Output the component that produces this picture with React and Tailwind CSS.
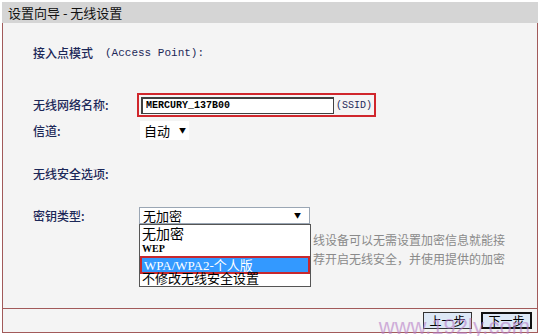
import React from "react";

// Wireless setup wizard step: router admin page
const cjk = { fontFamily: '"Noto Sans CJK SC", "Liberation Sans", sans-serif' };
const mono = { fontFamily: '"Liberation Mono", "Noto Sans CJK SC", monospace' };

function Label({ children }) {
  return (
    <div className="w-[104px] shrink-0 text-[12px] leading-[14px] font-medium text-[#1c2858]">
      {children}
    </div>
  );
}

export default function App() {
  return (
    <div className="relative w-[540px] h-[336px] bg-white overflow-hidden" style={cjk}>
      <div className="pt-[2px] pl-[2px]">
        <header className="w-[536px] h-[21px] bg-[#d5d5d5] pl-[6px] flex items-center text-[13px] text-[#111]">
          设置向导 - 无线设置
        </header>

        <div className="w-[536px] border-x border-b border-[#a25a5a] bg-[#f4f4f4]">
          <div className="h-[285px] pl-[30px] flex flex-col">
            <div className="mt-[23px] flex items-center h-[14px] text-[12px] font-medium text-[#1c2858]">
              <span>接入点模式</span>
              <span className="ml-[12px] text-[11px]" style={mono}>
                (Access Point):
              </span>
            </div>

            <div className="mt-[33px] flex items-center h-[24px]">
              <Label>无线网络名称:</Label>
              <div className="flex items-center h-[24px] w-[239px] border-2 border-[#d0262c] pl-[2px]">
                <div
                  className="w-[193px] h-[17px] bg-white border border-t-2 border-l-2 border-[#404040] pl-[3px] text-[10px] leading-[13px] font-bold text-black"
                  style={mono}
                >
                  MERCURY_137B00
                </div>
                <span className="ml-[2px] text-[10px] text-[#1c2858]" style={mono}>
                  (SSID)
                </span>
              </div>
            </div>

            <div className="mt-[4px] flex items-center h-[19px]">
              <Label>信道:</Label>
              <div className="ml-[3px] w-[49px] h-[19px] bg-white flex items-center pl-[4px] text-[13px] text-black">
                <span>自动</span>
                <span className="ml-[9px] text-[7px]">▼</span>
              </div>
            </div>

            <div className="mt-[27px] flex items-center h-[14px]">
              <Label>无线安全选项:</Label>
            </div>

            <div className="mt-[26px] flex items-center h-[17px]">
              <Label>密钥类型:</Label>
              <div className="relative ml-[2px] w-[171px] h-[17px] bg-white border border-[#9aa6b4] flex items-center pl-[3px] text-[13px] text-black">
                <span>无加密</span>
                <span className="absolute right-[8px] text-[7px]">▼</span>

                <div className="absolute left-[-1px] top-[16px] w-[172px] h-[63px] bg-white border border-[#555] overflow-hidden z-10">
                  <div className="h-[17px] pl-[2px] text-[14px] leading-[17px]">无加密</div>
                  <div className="h-[14px] pl-[2px] text-[10px] font-bold leading-[14px]" style={{ fontFamily: '"Liberation Serif", serif' }}>
                    WEP
                  </div>
                  <div className="h-[18px] border-2 border-[#c8282e] bg-[#3399ff] pl-[2px] text-[13px] leading-[14px] text-white">
                    <span style={{ fontFamily: '"Liberation Serif", "Noto Sans CJK SC", serif' }}>WPA/WPA2-</span>个人版
                  </div>
                  <div className="-mt-[5px] pl-[2px] text-[13px] leading-[17px]">不修改无线安全设置</div>
                </div>
              </div>
            </div>

            <div className="mt-[6px] pl-[280px] text-[12px] leading-[19px] text-[#8a8a8a] whitespace-nowrap">
              <div>线设备可以无需设置加密信息就能接</div>
              <div>荐开启无线安全，并使用提供的加密</div>
            </div>
          </div>

          <div className="h-[24px] border-t border-[#a25a5a] flex items-center justify-end gap-[9px] pr-[5px]">
            <button className="w-[49px] h-[17px] bg-[#dde8f6] border border-[#333] text-[12px] leading-[14px] text-black">
              上一步
            </button>
            <button className="w-[51px] h-[17px] bg-[#dde8f6] border-2 border-[#111] text-[12px] leading-[13px] text-black">
              下一步
            </button>
          </div>
        </div>
      </div>

      <div
        className="absolute right-[10px] bottom-[-3px] text-[22px] leading-[24px] text-[#b77fc8] opacity-60 pointer-events-none"
        style={{ fontFamily: '"Liberation Sans", sans-serif' }}
      >
        www.192ly.com
      </div>
    </div>
  );
}
